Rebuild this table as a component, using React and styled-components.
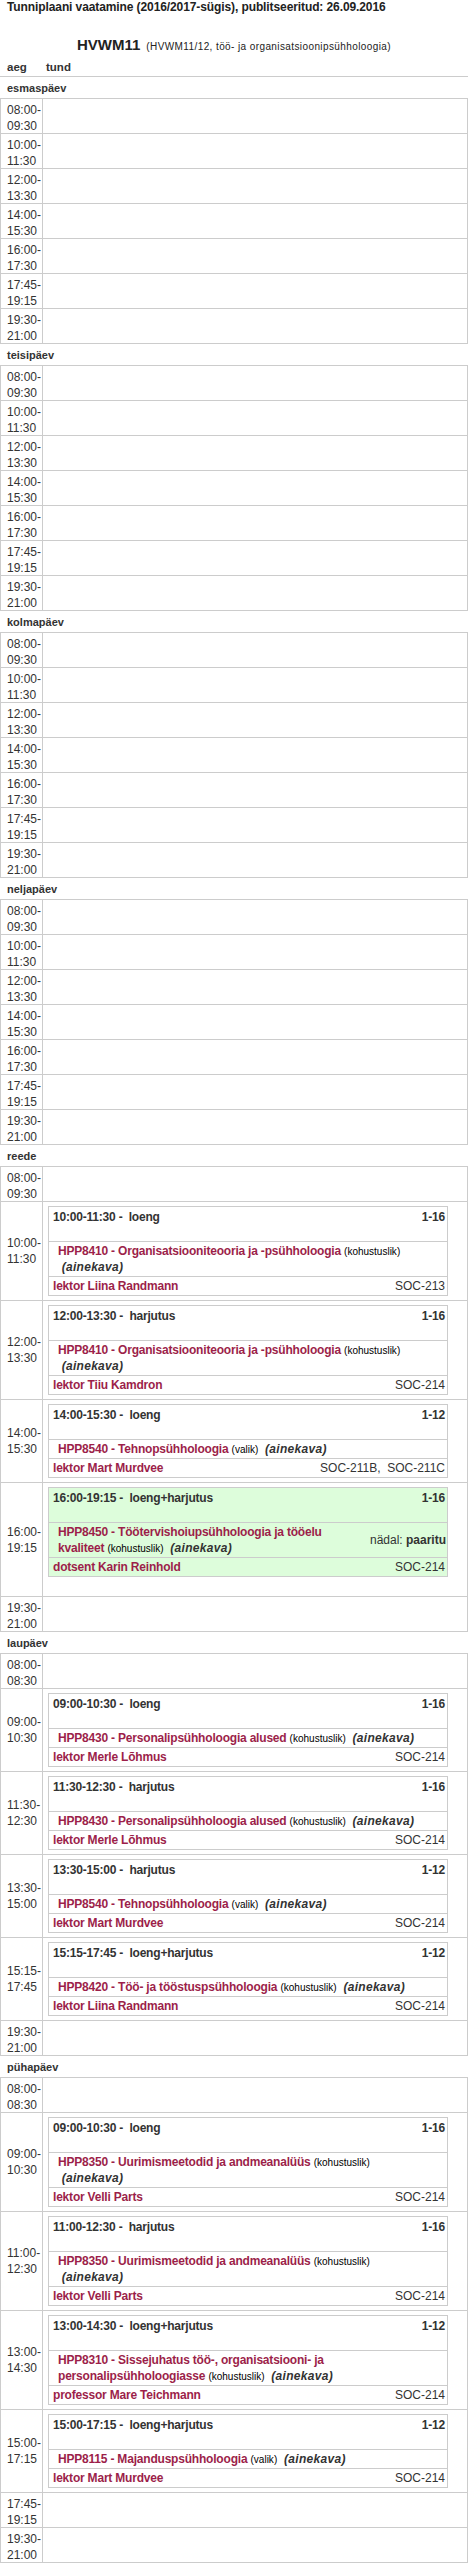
import React from 'react'
import styled, { createGlobalStyle } from 'styled-components'

const GlobalStyle = createGlobalStyle`
  body {
    margin: 0;
    background: #fff;
    color: #333;
    font-family: "Liberation Sans", Arial, Helvetica, sans-serif;
  }
`

const MAROON = '#9c1f4a'

const empty = (times) => times.map((t) => ({ time: t }))
const weekdayRows = empty([
  ['08:00-', '09:30'],
  ['10:00-', '11:30'],
  ['12:00-', '13:30'],
  ['14:00-', '15:30'],
  ['16:00-', '17:30'],
  ['17:45-', '19:15'],
  ['19:30-', '21:00'],
])

const days = [
  { name: 'esmaspäev', rows: weekdayRows },
  { name: 'teisipäev', rows: weekdayRows },
  { name: 'kolmapäev', rows: weekdayRows },
  { name: 'neljapäev', rows: weekdayRows },
  {
    name: 'reede',
    rows: [
      { time: ['08:00-', '09:30'] },
      {
        time: ['10:00-', '11:30'],
        ev: { head: '10:00-11:30 -\u00a0 loeng', weeks: '1-16', code: 'HPP8410 - Organisatsiooniteooria ja -psühholoogia', kind: 'kohustuslik', br: true, teacher: 'lektor Liina Randmann', room: 'SOC-213' },
      },
      {
        time: ['12:00-', '13:30'],
        ev: { head: '12:00-13:30 -\u00a0 harjutus', weeks: '1-16', code: 'HPP8410 - Organisatsiooniteooria ja -psühholoogia', kind: 'kohustuslik', br: true, teacher: 'lektor Tiiu Kamdron', room: 'SOC-214' },
      },
      {
        time: ['14:00-', '15:30'],
        ev: { head: '14:00-15:30 -\u00a0 loeng', weeks: '1-12', code: 'HPP8540 - Tehnopsühholoogia', kind: 'valik', teacher: 'lektor Mart Murdvee', room: 'SOC-211B,\u00a0 SOC-211C' },
      },
      {
        time: ['16:00-', '19:15'],
        tall: true,
        ev: { green: true, head: '16:00-19:15 -\u00a0 loeng+harjutus', weeks: '1-16', code: 'HPP8450 - Töötervishoiupsühholoogia ja tööelu kvaliteet', kind: 'kohustuslik', week: 'paaritu', teacher: 'dotsent Karin Reinhold', room: 'SOC-214' },
      },
      { time: ['19:30-', '21:00'] },
    ],
  },
  {
    name: 'laupäev',
    rows: [
      { time: ['08:00-', '08:30'] },
      {
        time: ['09:00-', '10:30'],
        ev: { head: '09:00-10:30 -\u00a0 loeng', weeks: '1-16', code: 'HPP8430 - Personalipsühholoogia alused', kind: 'kohustuslik', teacher: 'lektor Merle Lõhmus', room: 'SOC-214' },
      },
      {
        time: ['11:30-', '12:30'],
        ev: { head: '11:30-12:30 -\u00a0 harjutus', weeks: '1-16', code: 'HPP8430 - Personalipsühholoogia alused', kind: 'kohustuslik', teacher: 'lektor Merle Lõhmus', room: 'SOC-214' },
      },
      {
        time: ['13:30-', '15:00'],
        ev: { head: '13:30-15:00 -\u00a0 harjutus', weeks: '1-12', code: 'HPP8540 - Tehnopsühholoogia', kind: 'valik', teacher: 'lektor Mart Murdvee', room: 'SOC-214' },
      },
      {
        time: ['15:15-', '17:45'],
        ev: { head: '15:15-17:45 -\u00a0 loeng+harjutus', weeks: '1-12', code: 'HPP8420 - Töö- ja tööstuspsühholoogia', kind: 'kohustuslik', teacher: 'lektor Liina Randmann', room: 'SOC-214' },
      },
      { time: ['19:30-', '21:00'] },
    ],
  },
  {
    name: 'pühapäev',
    rows: [
      { time: ['08:00-', '08:30'] },
      {
        time: ['09:00-', '10:30'],
        ev: { head: '09:00-10:30 -\u00a0 loeng', weeks: '1-16', code: 'HPP8350 - Uurimismeetodid ja andmeanalüüs', kind: 'kohustuslik', br: true, teacher: 'lektor Velli Parts', room: 'SOC-214' },
      },
      {
        time: ['11:00-', '12:30'],
        ev: { head: '11:00-12:30 -\u00a0 harjutus', weeks: '1-16', code: 'HPP8350 - Uurimismeetodid ja andmeanalüüs', kind: 'kohustuslik', br: true, teacher: 'lektor Velli Parts', room: 'SOC-214' },
      },
      {
        time: ['13:00-', '14:30'],
        ev: { head: '13:00-14:30 -\u00a0 loeng+harjutus', weeks: '1-12', code: 'HPP8310 - Sissejuhatus töö-, organisatsiooni- ja personalipsühholoogiasse', kind: 'kohustuslik', teacher: 'professor Mare Teichmann', room: 'SOC-214' },
      },
      {
        time: ['15:00-', '17:15'],
        ev: { head: '15:00-17:15 -\u00a0 loeng+harjutus', weeks: '1-12', code: 'HPP8115 - Majanduspsühholoogia', kind: 'valik', teacher: 'lektor Mart Murdvee', room: 'SOC-214' },
      },
      { time: ['17:45-', '19:15'] },
      { time: ['19:30-', '21:00'] },
    ],
  },
]

function Lesson({ ev }) {
  return (
    <EventBox $green={ev.green}>
      <EventHead>
        <span>{ev.head}</span>
        <span>{ev.weeks}</span>
      </EventHead>
      <CourseRow>
        <Course $narrow={!!ev.week}>
          {ev.code} <Kind>({ev.kind})</Kind>
          {ev.br ? <br /> : ' '}
          <Plan>{'\u00a0'}(ainekava)</Plan>
        </Course>
        {ev.week && (
          <Week>
            nädal:&nbsp;<b>{ev.week}</b>
          </Week>
        )}
      </CourseRow>
      <EventFoot>
        <Teacher>{ev.teacher}</Teacher>
        <Room>{ev.room}</Room>
      </EventFoot>
    </EventBox>
  )
}

export default function App() {
  return (
    <Page>
      <GlobalStyle />
      <Title>Tunniplaani vaatamine (2016/2017-sügis), publitseeritud: 26.09.2016</Title>
      <GroupLine>
        <GroupCode>HVWM11</GroupCode>
        <GroupName>(HVWM11/12, töö- ja organisatsioonipsühholoogia)</GroupName>
      </GroupLine>
      <ColHead>
        <ColAeg>aeg</ColAeg>
        <span>tund</span>
      </ColHead>
      {days.map((day) => (
        <section key={day.name}>
          <DayTitle>{day.name}</DayTitle>
          <Grid>
            {day.rows.map((row, i) => (
              <Slot key={i}>
                <TimeCell $empty={!row.ev}>
                  <span>{row.time[0]}</span>
                  <span>{row.time[1]}</span>
                </TimeCell>
                <SlotBody $tall={row.tall}>{row.ev && <Lesson ev={row.ev} />}</SlotBody>
              </Slot>
            ))}
          </Grid>
        </section>
      ))}
    </Page>
  )
}

const Page = styled.div`
  width: 468px;
`

const Title = styled.h1`
  margin: 0;
  padding: 0 7px;
  font-size: 12px;
  line-height: 14px;
  font-weight: bold;
  color: #222;
  letter-spacing: -0.1px;
`

const GroupLine = styled.div`
  margin-top: 21px;
  text-align: center;
  line-height: 20px;
  color: #222;
`

const GroupCode = styled.span`
  font-size: 15px;
  font-weight: bold;
`

const GroupName = styled.span`
  margin-left: 6px;
  font-size: 10px;
  line-height: 1;
  letter-spacing: 0.4px;
`

const ColHead = styled.div`
  display: flex;
  padding: 4px 7px 1px;
  border-bottom: 1px solid #ccc;
  font-size: 11.5px;
  font-weight: bold;
  line-height: 16px;
  color: #333;
`

const ColAeg = styled.span`
  width: 39px;
`

const DayTitle = styled.div`
  padding: 3px 7px 2px;
  font-size: 11px;
  font-weight: bold;
  line-height: 16px;
  color: #333;
`

const Grid = styled.div`
  border: 1px solid #ccc;
`

const Slot = styled.div`
  display: flex;
  & + & {
    border-top: 1px solid #ccc;
  }
`

const TimeCell = styled.div`
  box-sizing: border-box;
  width: 42px;
  flex-shrink: 0;
  display: flex;
  flex-direction: column;
  justify-content: ${(p) => (p.$empty ? 'flex-start' : 'center')};
  padding: ${(p) => (p.$empty ? '3px 0 0 6px' : '0 0 0 6px')};
  height: ${(p) => (p.$empty ? '34px' : 'auto')};
  overflow: visible;
  border-right: 1px solid #ccc;
  font-size: 12px;
  line-height: 16px;
  color: #333;
  & > span {
    flex-shrink: 0;
    height: 16px;
  }
`

const SlotBody = styled.div`
  flex: 1;
  padding: ${(p) => (p.$tall ? '4px 19px 19px 5px' : '4px 19px 4px 5px')};
  &:empty {
    padding: 0;
  }
`

const EventBox = styled.div`
  border: 1px solid #ccc;
  background: ${(p) => (p.$green ? '#ddfddb' : '#fff')};
`

const EventHead = styled.div`
  display: flex;
  justify-content: space-between;
  height: 35px;
  box-sizing: border-box;
  padding: 2px 2px 0 4px;
  border-bottom: 1px solid #ccc;
  font-size: 12px;
  font-weight: bold;
  line-height: 16px;
  letter-spacing: -0.2px;
  color: #333;
`

const CourseRow = styled.div`
  display: flex;
  border-bottom: 1px solid #ccc;
`

const Course = styled.div`
  flex: ${(p) => (p.$narrow ? '0 0 302px' : '1')};
  box-sizing: border-box;
  padding: 1px 4px 1px 9px;
  font-size: 12px;
  font-weight: bold;
  line-height: 16px;
  letter-spacing: -0.2px;
  color: ${MAROON};
`

const Kind = styled.span`
  font-size: 10px;
  font-weight: normal;
  line-height: 1;
  letter-spacing: 0;
  color: #000;
`

const Plan = styled.span`
  font-style: italic;
  letter-spacing: 0.3px;
  color: #333;
`

const Week = styled.div`
  flex: 1;
  display: flex;
  align-items: center;
  justify-content: flex-end;
  padding-right: 1px;
  font-size: 12px;
  line-height: 16px;
  color: #333;
`

const EventFoot = styled.div`
  display: flex;
  justify-content: space-between;
  padding: 1px 2px 1px 4px;
  line-height: 16px;
  font-size: 12px;
`

const Teacher = styled.span`
  font-weight: bold;
  letter-spacing: -0.2px;
  color: ${MAROON};
`

const Room = styled.span`
  color: #333;
`
